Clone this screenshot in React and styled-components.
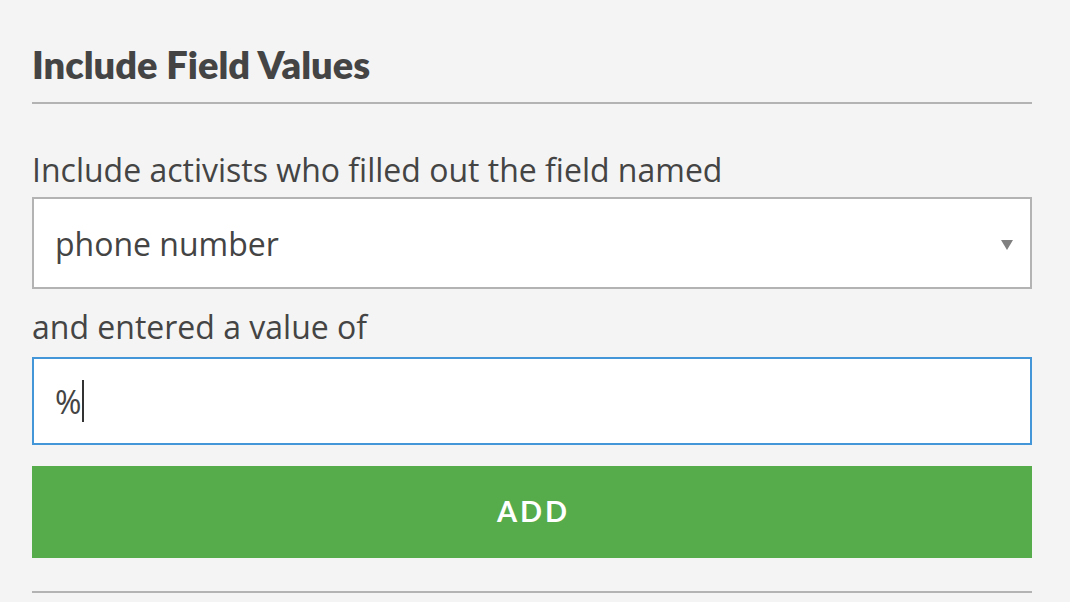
import React from 'react';
import styled, { createGlobalStyle } from 'styled-components';

const GlobalStyle = createGlobalStyle`
  html, body {
    margin: 0;
    padding: 0;
    background: #f4f4f4;
  }
  body {
    font-family: "Open Sans", "Liberation Sans", sans-serif;
    color: #444;
  }
`;

const Panel = styled.div`
  width: 1000px;
  padding: 0 32px;
  box-sizing: content-box;
`;

const Heading = styled.h2`
  margin: 0;
  padding-top: 41px;
  padding-bottom: 15px;
  font-family: Lato, "Liberation Sans", sans-serif;
  font-weight: 800;
  font-size: 38px;
  line-height: 46px;
  color: #444;
  border-bottom: 2px solid #b3b3b3;
`;

const Label = styled.div`
  font-size: 32px;
  line-height: 40px;
  color: #444;
  margin-top: ${(p) => p.top}px;
  margin-bottom: ${(p) => p.bottom}px;
`;

const SelectBox = styled.div`
  position: relative;
  height: 88px;
  background: #fff;
  border: 2px solid #b3b3b3;
  display: flex;
  align-items: center;
  padding: 0 21px;
  font-size: 32px;
  color: #444;
`;

const Caret = styled.span`
  position: absolute;
  right: 17px;
  top: 41px;
  width: 0;
  height: 0;
  border-left: 6px solid transparent;
  border-right: 6px solid transparent;
  border-top: 10px solid #808080;
`;

const InputBox = styled.div`
  height: 84px;
  background: #fff;
  border: 2px solid #4396d8;
  display: flex;
  align-items: center;
  padding: 0 21px;
  font-size: 32px;
  color: #444;
`;

const Cursor = styled.span`
  display: inline-block;
  width: 2px;
  height: 42px;
  background: #333;
  margin-left: 1px;
`;

const AddButton = styled.button`
  display: block;
  width: 100%;
  height: 92px;
  margin-top: 21px;
  border: 0;
  background: #56ab4a;
  color: #fff;
  font-family: Lato, "Liberation Sans", sans-serif;
  font-weight: 700;
  font-size: 29px;
  letter-spacing: 3px;
  padding: 0 0 4px 3px;
  cursor: pointer;
`;

const Divider = styled.div`
  margin-top: 33px;
  border-top: 2px solid #b3b3b3;
`;

export default function App() {
  return (
    <>
      <GlobalStyle />
      <Panel>
        <Heading>Include Field Values</Heading>
        <Label top={46} bottom={7}>Include activists who filled out the field named</Label>
        <SelectBox>
          phone number
          <Caret />
        </SelectBox>
        <Label top={18} bottom={10}>and entered a value of</Label>
        <InputBox>
          %<Cursor />
        </InputBox>
        <AddButton>ADD</AddButton>
        <Divider />
      </Panel>
    </>
  );
}
